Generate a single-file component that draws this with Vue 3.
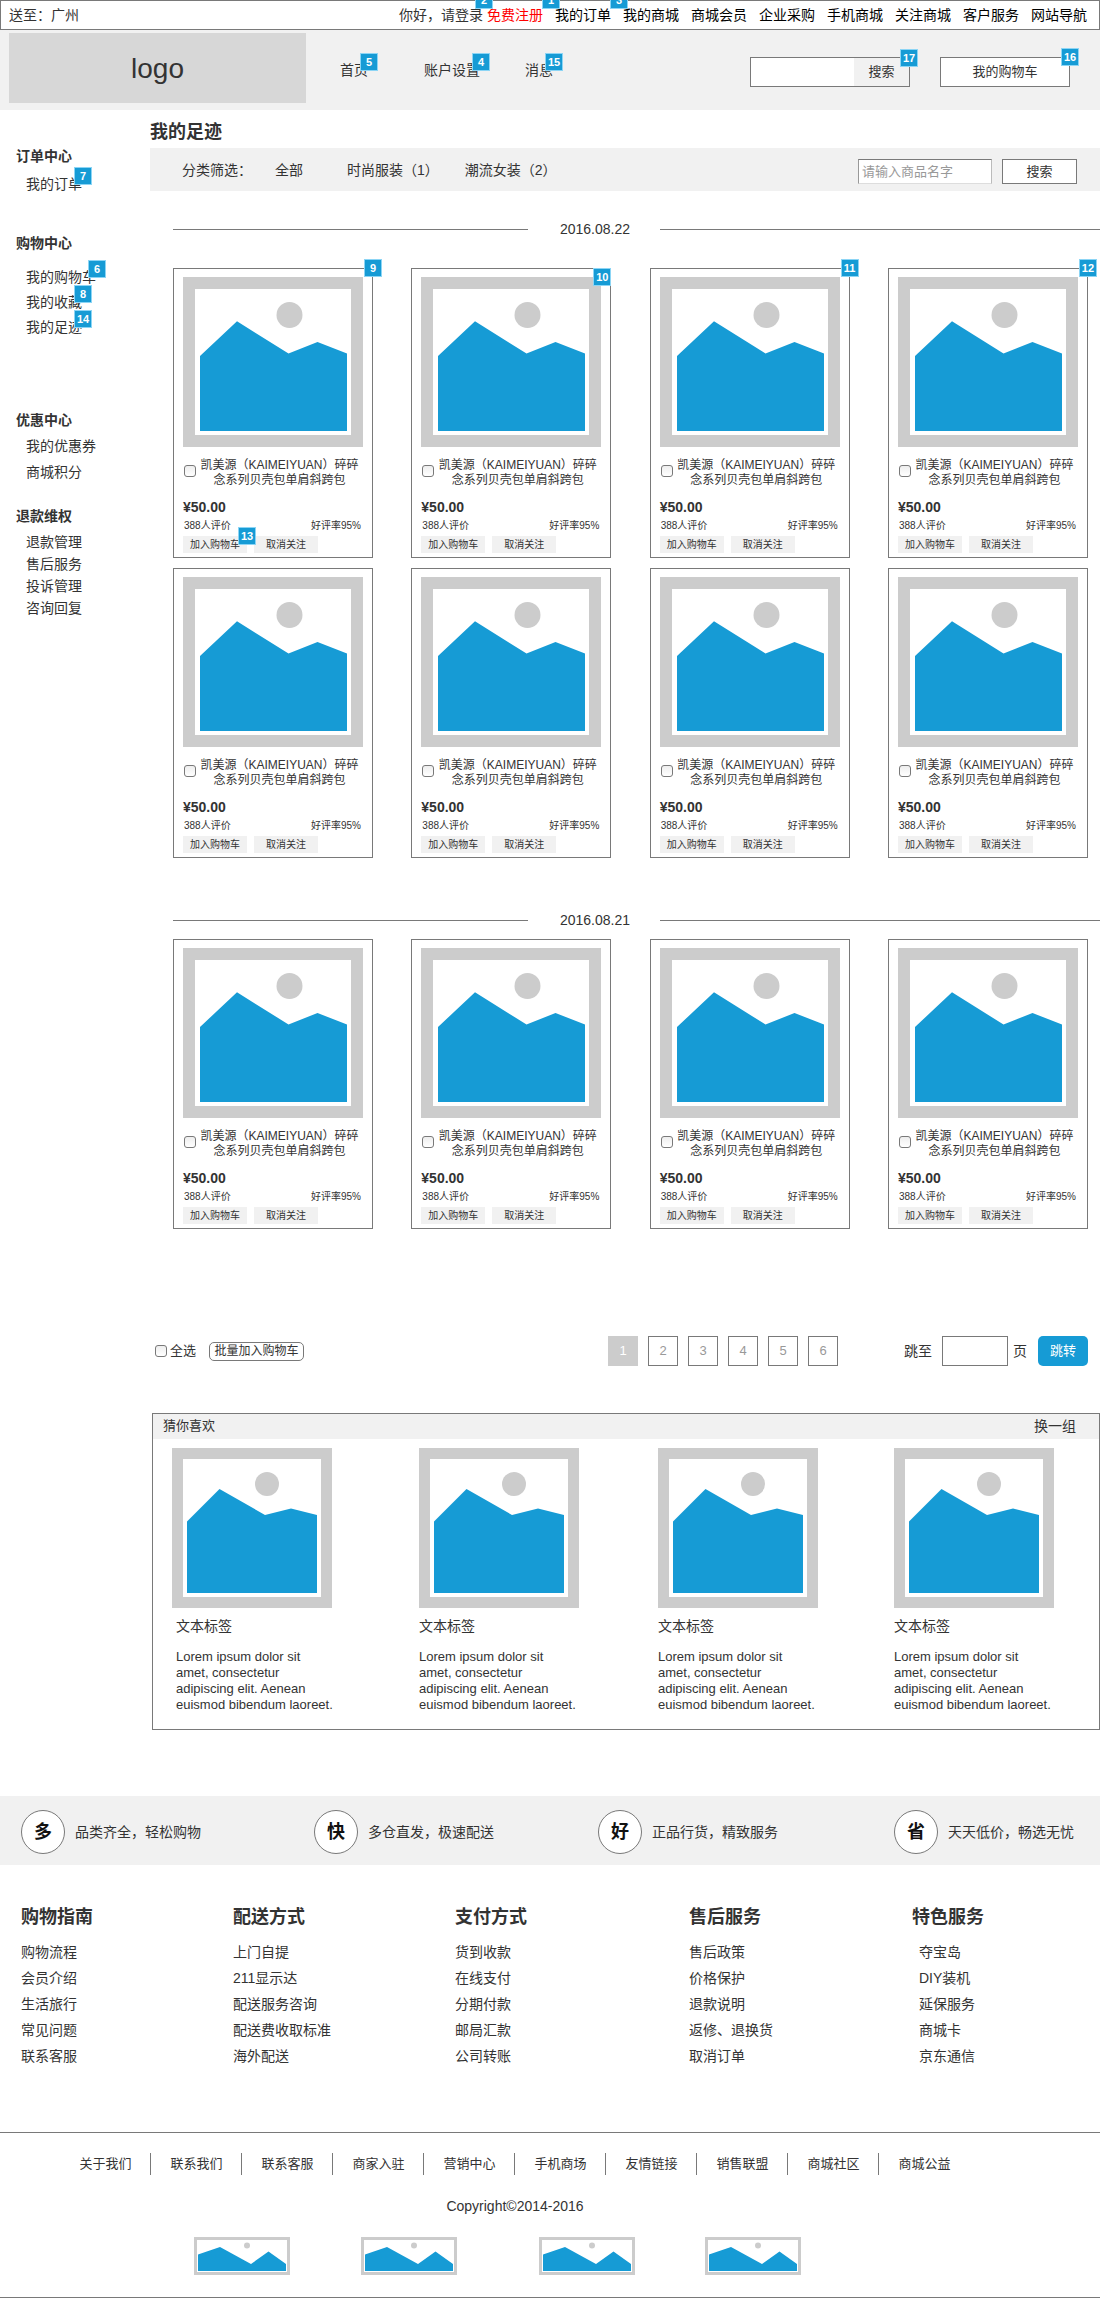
<script setup>
import { ref } from 'vue'

const topLinks = ['我的商城', '商城会员', '企业采购', '手机商城', '关注商城', '客户服务', '网站导航']

const mainNav = [
  { text: '首页', note: 5 },
  { text: '账户设置', note: 4 },
  { text: '消息', note: 15 },
]

const sideGroups = [
  { key: 'orders', title: '订单中心', items: [{ text: '我的订单', note: 7 }] },
  {
    key: 'shopping',
    title: '购物中心',
    items: [
      { text: '我的购物车', note: 6 },
      { text: '我的收藏', note: 8 },
      { text: '我的足迹', note: 14 },
    ],
  },
  { key: 'coupons', title: '优惠中心', items: [{ text: '我的优惠券' }, { text: '商城积分' }] },
  {
    key: 'refunds',
    title: '退款维权',
    items: [{ text: '退款管理' }, { text: '售后服务' }, { text: '投诉管理' }, { text: '咨询回复' }],
  },
]

const makeProducts = (start, count) => Array.from({ length: count }, (_, i) => ({ id: start + i }))

const days = [
  { date: '2016.08.22', products: makeProducts(1, 8) },
  { date: '2016.08.21', products: makeProducts(9, 4) },
]
const cardNotes = { 1: 9, 2: 10, 3: 11, 4: 12 }
const buttonNotes = { 1: 13 }

const page = ref(1)
const selected = ref([])
const keyword = ref('')

const services = [
  { mark: '多', text: '品类齐全，轻松购物' },
  { mark: '快', text: '多仓直发，极速配送' },
  { mark: '好', text: '正品行货，精致服务' },
  { mark: '省', text: '天天低价，畅选无忧' },
]

const helpColumns = [
  { title: '购物指南', links: ['购物流程', '会员介绍', '生活旅行', '常见问题', '联系客服'] },
  { title: '配送方式', links: ['上门自提', '211显示达', '配送服务咨询', '配送费收取标准', '海外配送'] },
  { title: '支付方式', links: ['货到收款', '在线支付', '分期付款', '邮局汇款', '公司转账'] },
  { title: '售后服务', links: ['售后政策', '价格保护', '退款说明', '返修、退换货', '取消订单'] },
  { title: '特色服务', links: ['夺宝岛', 'DIY装机', '延保服务', '商城卡', '京东通信'] },
]

const aboutLinks = [
  '关于我们', '联系我们', '联系客服', '商家入驻', '营销中心',
  '手机商场', '友情链接', '销售联盟', '商城社区', '商城公益',
]
</script>

<template>
  <div class="page" lang="zh-CN">
    <div class="topbar">
      <span>送至：广州</span>
      <div class="top-links">
        <span class="anchor login">你好，<a href="#">请登录</a><i class="note top-edge">2</i></span>
        <span class="anchor register"><a href="#">免费注册</a><i class="note top-edge after">1</i></span>
        <span class="anchor"><a href="#">我的订单</a><i class="note top-edge after">3</i></span>
        <a v-for="t in topLinks" :key="t" href="#">{{ t }}</a>
      </div>
    </div>

    <header class="header">
      <div class="logo">logo</div>
      <nav class="main-nav">
        <span v-for="n in mainNav" :key="n.text" class="anchor">
          <a href="#">{{ n.text }}</a><i class="note">{{ n.note }}</i>
        </span>
      </nav>
      <form class="site-search anchor" @submit.prevent>
        <input type="text" aria-label="站内搜索" />
        <button type="submit">搜索</button>
        <i class="note corner">17</i>
      </form>
      <div class="cart anchor">
        <button type="button">我的购物车</button>
        <i class="note corner">16</i>
      </div>
    </header>

    <div class="body">
      <aside class="sidebar">
        <section v-for="g in sideGroups" :key="g.key" :class="['side-group', g.key]">
          <h3>{{ g.title }}</h3>
          <ul>
            <li v-for="i in g.items" :key="i.text">
              <span class="anchor">
                <a href="#">{{ i.text }}</a><i v-if="i.note" class="note">{{ i.note }}</i>
              </span>
            </li>
          </ul>
        </section>
      </aside>

      <main class="main">
        <h2>我的足迹</h2>
        <div class="filter">
          <span>分类筛选：</span>
          <a href="#">全部</a>
          <a href="#">时尚服装（1）</a>
          <a href="#">潮流女装（2）</a>
          <form class="filter-search" @submit.prevent>
            <input v-model="keyword" type="text" placeholder="请输入商品名字" aria-label="商品名字" />
            <button type="submit">搜索</button>
          </form>
        </div>

        <section v-for="day in days" :key="day.date" class="day">
          <div class="date-row"><time>{{ day.date }}</time></div>
          <div class="cards">
            <article v-for="p in day.products" :key="p.id" class="card">
              <svg viewBox="0 0 180 170" width="180" height="170" aria-hidden="true">
                <rect width="180" height="170" fill="#ccc" />
                <rect x="12" y="12" width="156" height="146" fill="#fff" />
                <circle cx="106.5" cy="38" r="13" fill="#ccc" />
                <path d="M17 79 54 44.3 105.5 76.5 134.5 65 164 76.5V154H17Z" fill="#169bd5" />
              </svg>
              <label class="name">
                <input v-model="selected" type="checkbox" :value="p.id" />
                <span>凯美源（KAIMEIYUAN）碎碎念系列贝壳包单肩斜跨包</span>
              </label>
              <strong class="price">¥50.00</strong>
              <div class="rating"><span>388人评价</span><span>好评率95%</span></div>
              <div class="actions">
                <span class="anchor">
                  <button type="button">加入购物车</button>
                  <i v-if="buttonNotes[p.id]" class="note corner">{{ buttonNotes[p.id] }}</i>
                </span>
                <button type="button">取消关注</button>
              </div>
              <i v-if="cardNotes[p.id]" :class="['note', 'corner', { inside: p.id === 2 }]">{{ cardNotes[p.id] }}</i>
            </article>
          </div>
        </section>

        <div class="toolbar">
          <div class="batch">
            <label><input type="checkbox" />全选</label>
            <button type="button">批量加入购物车</button>
          </div>
          <div class="pager">
            <button v-for="n in 6" :key="n" type="button" :class="{ current: n === page }" @click="page = n">{{ n }}</button>
          </div>
          <form class="jump" @submit.prevent>
            <label for="jump-page">跳至</label>
            <input id="jump-page" type="text" />
            <span>页</span>
            <button type="submit">跳转</button>
          </form>
        </div>

        <section class="guess">
          <div class="guess-head">
            <h3>猜你喜欢</h3>
            <a href="#">换一组</a>
          </div>
          <div class="guess-list">
            <article v-for="n in 4" :key="n">
              <svg viewBox="0 0 160 160" width="160" height="160" aria-hidden="true">
                <rect width="160" height="160" fill="#ccc" />
                <rect x="11" y="11" width="138" height="138" fill="#fff" />
                <circle cx="95" cy="36" r="12" fill="#ccc" />
                <path d="M15 73.5 47.5 41 93 67 119 60.5 145 67V145H15Z" fill="#169bd5" />
              </svg>
              <h4>文本标签</h4>
              <p>Lorem ipsum dolor sit amet, consectetur adipiscing elit. Aenean euismod bibendum laoreet.</p>
            </article>
          </div>
        </section>
      </main>
    </div>

    <div class="services">
      <div v-for="s in services" :key="s.mark" class="service">
        <b>{{ s.mark }}</b><span>{{ s.text }}</span>
      </div>
    </div>

    <div class="help">
      <section v-for="c in helpColumns" :key="c.title">
        <h3>{{ c.title }}</h3>
        <ul>
          <li v-for="l in c.links" :key="l"><a href="#">{{ l }}</a></li>
        </ul>
      </section>
    </div>

    <footer class="footer">
      <nav class="about">
        <a v-for="l in aboutLinks" :key="l" href="#">{{ l }}</a>
      </nav>
      <p class="copyright">Copyright©2014-2016</p>
      <div class="badges">
        <svg v-for="n in 4" :key="n" viewBox="0 0 96 38" width="96" height="38" aria-hidden="true">
          <rect width="96" height="38" fill="#ccc" />
          <rect x="3" y="3" width="90" height="32" fill="#fff" />
          <circle cx="53" cy="8.5" r="3" fill="#ccc" />
          <path d="M4 17.5 26 10 57 27 74.5 14.5 92 27V34H4Z" fill="#169bd5" />
        </svg>
      </div>
    </footer>
  </div>
</template>

<style>
body {
  margin: 0;
  background: #fff;
}
</style>

<style scoped>
.page {
  border-bottom: 1px solid #797979;
  color: #333;
  font: 14px/20px "Liberation Sans", "Noto Sans CJK SC", sans-serif;
  overflow: hidden;
}
.page *,
.page {
  box-sizing: border-box;
}
h2, h3, h4, p, ul {
  margin: 0;
  padding: 0;
  font-size: inherit;
}
ul {
  list-style: none;
}
a {
  color: inherit;
  text-decoration: none;
}
svg {
  display: block;
}
button,
input {
  margin: 0;
  padding: 0;
  border: 1px solid #797979;
  border-radius: 0;
  background: #fff;
  color: #333;
  font-family: inherit;
  font-size: 13px;
  line-height: 16px;
}
input[type="checkbox"] {
  appearance: none;
  flex: none;
  width: 12px;
  height: 12px;
  border-radius: 3px;
  background: linear-gradient(#eee, #fff);
}
input[type="checkbox"]:checked {
  background: #169bd5;
}

/* numbered annotation markers */
.anchor {
  position: relative;
}
.note {
  position: absolute;
  z-index: 1;
  left: calc(100% - 8px);
  top: -7px;
  width: 18px;
  height: 18px;
  border: 1px solid #8cd5f5;
  background: #169bd5;
  color: #fff;
  font: bold 11px/16px "Liberation Sans", sans-serif;
  text-align: center;
}
.note.top-edge {
  top: -14px;
}
.note.after {
  left: calc(100% - 1px);
}
.note.corner {
  left: auto;
  right: -9px;
  top: -9px;
}

.topbar {
  display: flex;
  justify-content: space-between;
  height: 30px;
  padding: 4px 12px 0 8px;
  border: 1px solid #797979;
}
.top-links {
  display: flex;
  gap: 12px;
  color: #000;
}
.login {
  margin-right: -8px;
  color: #333;
}
.register {
  color: #f00;
}

.header {
  display: flex;
  align-items: center;
  height: 80px;
  padding: 0 30px 0 9px;
  background: #f1f1f1;
}
.logo {
  width: 28%;
  height: 70px;
  margin-bottom: 4px;
  background: #d7d7d7;
  font-size: 28px;
  line-height: 72px;
  text-align: center;
}
.main-nav {
  display: flex;
  margin-left: 34px;
}
.main-nav .anchor:nth-child(2) {
  margin-left: 56px;
}
.main-nav .anchor:nth-child(3) {
  margin-left: 45px;
}
.site-search {
  display: flex;
  width: 160px;
  height: 30px;
  margin: 4px 30px 0 auto;
  border: 1px solid #797979;
}
.site-search input {
  flex: 1;
  min-width: 0;
  border: 0;
}
.site-search button {
  width: 55px;
  border: 0;
  background: #f1f1f1;
}
.cart {
  width: 130px;
  margin-top: 4px;
}
.cart button {
  display: block;
  width: 100%;
  height: 30px;
}

.body {
  display: flex;
}
.sidebar {
  width: 150px;
  padding: 36px 0 0 16px;
}
.side-group ul {
  display: flex;
  flex-direction: column;
  padding: 6px 0 0 10px;
}
.side-group .anchor {
  display: inline-block;
  vertical-align: top;
}
.orders ul {
  padding-top: 8px;
}
.shopping {
  margin-top: 39px;
}
.shopping ul {
  gap: 5px;
  padding-top: 14px;
}
.coupons {
  margin-top: 73px;
}
.coupons ul {
  gap: 6px;
}
.refunds {
  margin-top: 24px;
}
.refunds ul {
  gap: 2px;
}

.main {
  flex: 1;
  min-width: 0;
  padding-top: 10px;
}
.main h2 {
  margin-bottom: 4px;
  font-size: 18px;
  line-height: 24px;
}
.filter {
  display: flex;
  align-items: center;
  height: 43px;
  padding: 0 23px 0 32px;
  background: #f1f1f1;
}
.filter a {
  margin-left: 23px;
}
.filter a + a {
  margin-left: 44px;
}
.filter a + a + a {
  margin-left: 26px;
}
.filter-search {
  display: flex;
  gap: 10px;
  height: 25px;
  margin: 4px 0 0 auto;
}
.filter-search input {
  width: 134px;
  padding: 0 3px;
  border-color: #797979 #bbb #ddd #999;
}
.filter-search input::placeholder {
  color: #999;
  opacity: 1;
}
.filter-search button {
  width: 75px;
}

.day {
  padding: 29px 0 0 23px;
}
.day + .day {
  padding-top: 53px;
}
.date-row {
  display: flex;
  align-items: center;
  margin-bottom: 29px;
  line-height: 19px;
}
.day + .day .date-row {
  margin-bottom: 9px;
}
.date-row::before,
.date-row::after {
  flex: 355 1 0;
  height: 1px;
  background: #797979;
  content: "";
}
.date-row::after {
  flex-grow: 440;
}
.date-row time {
  width: 132px;
  padding-left: 2px;
  text-align: center;
}
.cards {
  display: grid;
  grid-template-columns: repeat(4, 200px);
  justify-content: space-between;
  gap: 10px 0;
  padding-right: 12px;
}
.card {
  position: relative;
  height: 290px;
  padding: 8px 9px 0;
  border: 1px solid #797979;
}
.card > .corner {
  right: -10px;
  top: -10px;
}
.card > .corner.inside {
  right: -1px;
  top: -1px;
}
.name {
  display: flex;
  align-items: center;
  gap: 1px;
  margin-top: 11px;
  padding-left: 1px;
  font-size: 12px;
  line-height: 15px;
}
.name input {
  margin-bottom: 4px;
}
.name span {
  flex: 1;
  padding-right: 1px;
  text-align: center;
}
.price {
  display: block;
  margin-top: 9px;
}
.rating {
  display: flex;
  justify-content: space-between;
  padding: 0 2px 0 1px;
  font-size: 10px;
  line-height: 18px;
}
.actions {
  display: flex;
  gap: 7px;
  margin-top: 1px;
}
.actions button {
  display: block;
  width: 64px;
  height: 17px;
  border: 0;
  background: #f1f1f1;
  font-size: 10px;
}

.toolbar {
  display: flex;
  align-items: center;
  margin-top: 107px;
  padding: 0 12px 0 5px;
}
.batch {
  display: flex;
  flex: 1;
  align-items: center;
  gap: 13px;
}
.batch label {
  display: flex;
  align-items: center;
  gap: 3px;
  font-size: 13px;
}
.batch button {
  width: 95px;
  height: 19px;
  border-radius: 5px;
  font-size: 12px;
}
.pager {
  display: flex;
  gap: 10px;
  margin-right: 66px;
}
.pager button {
  width: 30px;
  height: 30px;
  color: #999;
}
.pager .current {
  border-color: #ccc;
  background: #ccc;
  color: #fff;
}
.jump {
  display: flex;
  align-items: center;
}
.jump input {
  width: 66px;
  height: 30px;
  margin: 0 5px 0 10px;
  padding: 0 4px;
}
.jump button {
  width: 50px;
  height: 30px;
  margin-left: 11px;
  border: 0;
  border-radius: 5px;
  background: #169bd5;
  color: #fff;
}

.guess {
  margin: 47px 0 0 2px;
  padding-bottom: 16px;
  border: 1px solid #797979;
}
.guess-head {
  display: flex;
  justify-content: space-between;
  padding: 2px 23px 3px 10px;
  background: #f1f1f1;
}
.guess-head h3 {
  font-size: 13px;
  font-weight: normal;
}
.guess-list {
  display: grid;
  grid-template-columns: 247fr 239fr 236fr 205fr;
  padding: 9px 0 0 19px;
}
.guess h4 {
  margin: 8px 0 13px;
  font-weight: normal;
}
.guess p {
  width: 160px;
  font-size: 13px;
  line-height: 16px;
}
.guess article:first-child h4,
.guess article:first-child p {
  margin-left: 4px;
}

.services {
  display: grid;
  grid-template-columns: 293fr 284fr 296fr 206fr;
  height: 69px;
  margin-top: 66px;
  padding: 14px 0 0 21px;
  background: #f1f1f1;
}
.service {
  display: flex;
  gap: 10px;
  line-height: 44px;
  white-space: nowrap;
}
.service b {
  width: 44px;
  height: 44px;
  border: 1px solid #797979;
  border-radius: 50%;
  background: #fff;
  color: #111;
  font-size: 18px;
  line-height: 42px;
  text-align: center;
}

.help {
  display: grid;
  grid-template-columns: 212fr 222fr 234fr 223fr 188fr;
  padding: 40px 0 63px 21px;
}
.help h3 {
  margin-bottom: 10px;
  font-size: 18px;
  line-height: 24px;
}
.help li {
  line-height: 26px;
}
.help section:last-child ul {
  padding-left: 7px;
}

.footer {
  padding: 20px 0 22px;
  border-top: 1px solid #797979;
}
.about {
  display: flex;
  justify-content: center;
  padding-right: 70px;
}
.about a {
  width: 91px;
  padding-left: 1px;
  border-right: 1px solid #797979;
  font-size: 13px;
  line-height: 22px;
  text-align: center;
}
.about a:last-child {
  border-right-color: transparent;
}
.copyright {
  padding: 21px 70px 21px 0;
  text-align: center;
}
.badges {
  display: grid;
  grid-template-columns: 167fr 178fr 166fr 395fr;
  padding-left: 194px;
}
</style>
